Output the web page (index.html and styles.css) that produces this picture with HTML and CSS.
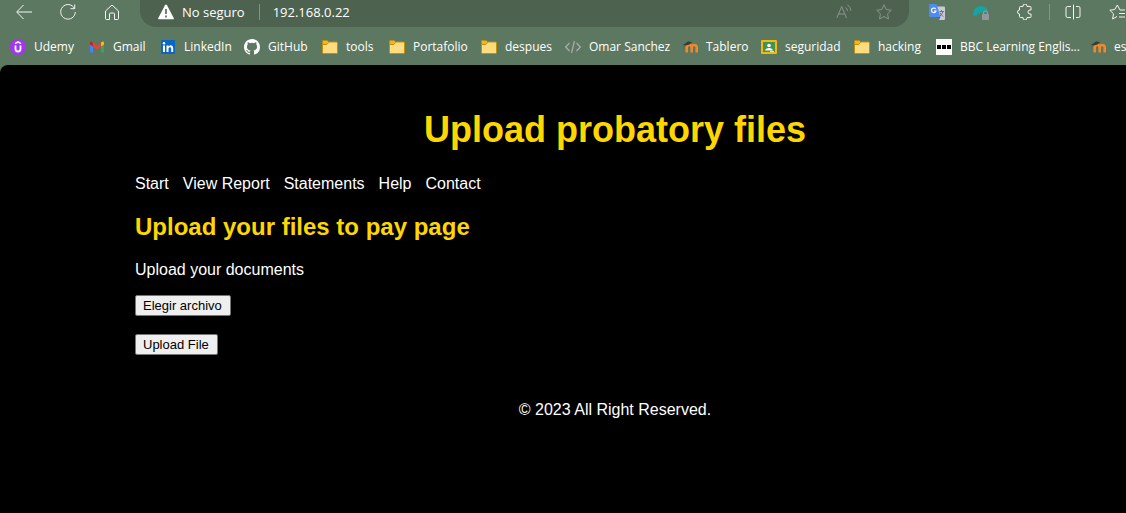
FILE: index.html
```
<!DOCTYPE html>
<html lang="en">
<head>
<meta charset="utf-8">
<title>Upload probatory files</title>
<link rel="stylesheet" href="styles.css">
</head>
<body>
<svg class="defs" aria-hidden="true">
  <symbol id="folder" viewBox="0 0 16 16">
    <path d="M.5 2.5Q.5 1.500 1.500 1.500H5L6.500 3H14.500Q15.500 3 15.500 4V13.500Q15.500 14.500 14.500 14.500H1.500Q.5 14.500.5 13.500Z" fill="#ffdc80" stroke="#c1900b"/>
    <path d="M1 2H5L6.200 3.200 4.800 5H1Z" fill="#e8b923"/>
    <path d="M.5 5.500H4.800L6.800 3.200" fill="none" stroke="#c1900b"/>
  </symbol>
  <symbol id="moodle" viewBox="0 0 16 16">
    <path d="M4.700 13.500V8.500Q4.700 6 7.200 6T9.700 8.500V13.500M9.700 8.500Q9.700 6 12.200 6T14.700 8.500V13.500" fill="none" stroke="#f0882d" stroke-width="2.600"/>
    <path d="M1 6 6 2.500 10 3 7.500 5.500 3.500 6.500Z" fill="#343c38"/>
    <path d="M1.500 6.300V11" stroke="#665f50" stroke-width=".7"/>
  </symbol>
</svg>
<header class="browser">
  <div class="toolbar">
    <div class="nav-buttons">
      <button class="icon-button" aria-label="Back"><svg viewBox="0 0 16 16"><path d="M16 8H1M7.500 1 .7 8l6.800 7"/></svg></button>
      <button class="icon-button" aria-label="Reload"><svg viewBox="0 0 16 16"><path d="M14.500 4.500A7.300 7.300 0 1 0 15.300 8M14.700.5V4.700H10.500"/></svg></button>
      <button class="icon-button" aria-label="Home"><svg viewBox="0 0 16 16"><path d="M1.500 7 8 1l6.500 6v7.500q0 1-1 1h-3V10q0-1-1-1h-3q-1 0-1 1v5.500h-3q-1 0-1-1Z"/></svg></button>
    </div>
    <div class="address">
      <svg class="icon" viewBox="0 0 16 16"><path d="M8 .5Q8.600.5 9 1.200L15.700 14Q16.200 15.300 15 15.300H1Q-.2 15.300.3 14L7 1.200Q7.400.5 8 .5Z" fill="#fff"/><path d="M8 5v5M8 11.500v2" stroke="#4d6350" stroke-width="1.600"/></svg>
      <span class="security">No seguro</span>
      <span class="rule"></span>
      <span class="url">192.168.0.22</span>
      <button class="icon-button dim" aria-label="Read aloud"><svg viewBox="0 0 16 16"><path d="M.8 14 5.700 2.500 10.500 14M2.500 10H8.800M9.500 3.500q1.800 1.300 2 3.500M11.500.8q3 2.200 3.500 6"/></svg></button>
      <button class="icon-button dim" aria-label="Add to favorites"><svg viewBox="0 0 16 16"><path d="m8 .8 2.200 4.700 5.100.7-3.700 3.600.9 5.200L8 12.500 3.500 15l.9-5.200L.7 6.200l5.100-.7Z"/></svg></button>
    </div>
    <div class="extensions">
      <button class="icon-button" aria-label="Translate"><svg viewBox="0 0 16 16"><path d="M7 2.500H15q1 0 1 1V15q0 1-1 1H10Z" fill="#c8ccd0" stroke="none"/><path d="M10.500 7.500h4.500M12.500 6v1.500M14 7.500q-1 3-3 4.500M11 8.500q1 3 3.500 4" stroke="#687078" stroke-width=".9"/><path d="M1 0H7.500L11.500 13H1Q0 13 0 12V1Q0 0 1 0Z" fill="#4d8bf0" stroke="none"/><path d="M8.500 13H11.500L10 16Z" fill="#3267c6" stroke="none"/><path d="M6.700 5A2.300 2.300 0 1 0 7 7H5" stroke="#fff" stroke-width="1.200"/></svg></button>
      <button class="icon-button" aria-label="VPN"><svg viewBox="0 0 16 16"><path d="M0 11.500Q0 6 3.200 3.800 6 1.700 9.200 2.200 14 3 15.500 7.500L11.300 7Q9.700 7.500 9 10L8 8 6.700 10.500 5.300 8.300 3 13 2 11.500Z" fill="#13a5a4" stroke="none"/><path d="M10.500 11V9.200a2 2 0 0 1 4 0V11" stroke="#92979b" stroke-width="1.300"/><rect x="9" y="10" width="7" height="6" rx=".7" fill="#92979b" stroke="none"/></svg></button>
      <button class="icon-button" aria-label="Extensions"><svg viewBox="0 0 16 16"><path d="M3.500 2.500H6V2a2 2 0 0 1 4 0v.5h3q1 0 1 1V6H13a2 2 0 0 0 0 4h1v2.500q0 1-1 1H10V14a2 2 0 0 1-4 0v-.5H3.500q-1 0-1-1V10a2 2 0 0 1 0-4V3.500q0-1 1-1Z"/></svg></button>
      <span class="rule"></span>
      <button class="icon-button" aria-label="Split screen"><svg viewBox="0 0 16 16"><path d="M6 2.500H2.500Q1 2.500 1 4v8q0 1.500 1.500 1.500H6M8.500.5v15M11 2.500h2.500Q15 2.500 15 4v8q0 1.500-1.500 1.500H11"/></svg></button>
      <button class="icon-button" aria-label="Favorites"><svg viewBox="0 0 16 16"><path d="M16 6H11L8.300 1 5.800 5.500.8 6.200 4.500 9.800 3.600 15 8 12.500M10 9.500H16M10 13H16"/></svg></button>
    </div>
  </div>
  <nav class="bookmarks" aria-label="Bookmarks">
    <a href="#"><svg class="icon" viewBox="0 0 16 16"><circle cx="8" cy="8" r="8" fill="#a435f0"/><path d="M5.500 6.500v3.500q0 2.500 2.500 2.500T10.500 10V6.500" fill="none" stroke="#fff" stroke-width="1.800"/><path d="M5 4.700 8 2.800l3 1.900" fill="none" stroke="#fff" stroke-width="1.500"/></svg>Udemy</a>
    <a href="#"><svg class="icon" viewBox="0 0 16 16"><path d="M1 4v9.500h3V6Z" fill="#4285f4"/><path d="M12 6v7.500h3V4Z" fill="#34a853"/><path d="m3.500 3 4.500 4 4.500-4v4L8 10.500 3.500 7Z" fill="#ea4335"/><path d="M1 3.500Q1.500 2 3.500 3l.5 4.500-3-2Z" fill="#c5221f"/><path d="M12 3.500Q14.500 1.500 15 3.500v2l-3 2Z" fill="#fbbc04"/></svg>Gmail</a>
    <a href="#"><svg class="icon" viewBox="0 0 16 16"><rect x="1" y="1" width="14" height="14" rx="1" fill="#0a66c2"/><path d="M3 6.500h2V13H3ZM6.500 6.500h2v1q2-2 3.700-.7 1 .7 1 2.700V13h-2V9.500q0-1.300-1.200-1.300T8.500 9.500V13h-2Z" fill="#fff"/><circle cx="4" cy="4.300" r="1.200" fill="#fff"/></svg>LinkedIn</a>
    <a href="#"><svg class="icon" viewBox="0 0 16 16"><path d="M8 0C3.580 0 0 3.580 0 8c0 3.540 2.290 6.530 5.470 7.590.4.070.55-.17.55-.38 0-.19-.01-.82-.01-1.490-2.010.37-2.530-.49-2.690-.94-.09-.23-.48-.94-.82-1.130-.28-.15-.68-.52-.01-.53.63-.01 1.080.58 1.230.82.72 1.210 1.870.87 2.330.66.07-.52.28-.87.51-1.070-1.780-.2-3.640-.89-3.640-3.950 0-.87.31-1.590.82-2.150-.08-.2-.36-1.020.08-2.120 0 0 .67-.21 2.200.82a7.600 7.600 0 0 1 4 0c1.530-1.040 2.200-.82 2.200-.82.44 1.100.16 1.920.08 2.120.51.56.82 1.270.82 2.150 0 3.070-1.870 3.750-3.650 3.950.29.25.54.73.54 1.480 0 1.070-.01 1.930-.01 2.200 0 .21.15.46.55.38A8.010 8.010 0 0 0 16 8c0-4.420-3.580-8-8-8Z" fill="#fff"/></svg>GitHub</a>
    <a href="#"><svg class="icon"><use href="#folder"/></svg>tools</a>
    <a href="#"><svg class="icon"><use href="#folder"/></svg>Portafolio</a>
    <a href="#"><svg class="icon"><use href="#folder"/></svg>despues</a>
    <a href="#"><svg class="icon" viewBox="0 0 16 16"><path d="M4.500 4 .7 8l3.800 4M11.500 4l3.800 4-3.800 4M9.500 2l-3 12" fill="none" stroke="#aaaeaa" stroke-width="1.200"/></svg>Omar Sanchez</a>
    <a href="#"><svg class="icon"><use href="#moodle"/></svg>Tablero</a>
    <a href="#"><svg class="icon" viewBox="0 0 16 16"><rect y="1" width="16" height="14" rx="1" fill="#f4b911"/><rect x="2" y="3" width="12" height="10" fill="#45934c"/><circle cx="8" cy="6.500" r="1.800" fill="#fff"/><path d="M4 11.500Q4.500 9 8 9t4 2.500Z" fill="#fff"/><path d="M9 12h4v1H9Z" fill="#dbe7d9"/></svg>seguridad</a>
    <a href="#"><svg class="icon"><use href="#folder"/></svg>hacking</a>
    <a href="#"><svg class="icon" viewBox="0 0 16 16"><path d="M0 0h16v16H0Z" fill="#fff"/><path d="M1 6h4v4H1ZM6 6h4v4H6ZM11 6h4v4h-4Z"/></svg>BBC Learning Englis...</a>
    <a href="#"><svg class="icon"><use href="#moodle"/></svg>es</a>
  </nav>
</header>
<main class="page">
  <h1>Upload probatory files</h1>
  <nav class="menu" aria-label="Main">
    <a href="#">Start</a>
    <a href="#">View Report</a>
    <a href="#">Statements</a>
    <a href="#">Help</a>
    <a href="#">Contact</a>
  </nav>
  <h2>Upload your files to pay page</h2>
  <p>Upload your documents</p>
  <form class="upload">
    <label class="control" for="document">Elegir archivo<input class="file" type="file" id="document"></label>
    <button class="control" type="submit">Upload File</button>
  </form>
  <footer>© 2023 All Right Reserved.</footer>
</main>
</body>
</html>
```

FILE: styles.css
```
* { box-sizing: border-box; }

body {
  display: flex;
  flex-direction: column;
  min-height: 100vh;
  margin: 0;
  overflow-x: hidden;
  background: #5c7860;
  font-family: "Liberation Sans", Arial, sans-serif;
}

.defs { position: absolute; width: 0; height: 0; }

.browser {
  color: #fff;
  font-family: "Segoe UI", "Open Sans", "Noto Sans", sans-serif;
}

.toolbar {
  display: flex;
  gap: 20px;
  height: 27px;
}

.nav-buttons,
.extensions {
  display: flex;
  gap: 28px;
  height: 24px;
  align-items: center;
}

.nav-buttons { padding-left: 16px; }
.extensions { padding-right: 1px; }

.icon-button {
  flex: none;
  width: 16px;
  height: 16px;
  padding: 0;
  border: 0;
  background: none;
  color: #f4f6f4;
}

.icon-button svg {
  display: block;
  width: 16px;
  height: 16px;
  fill: none;
  stroke: currentColor;
}

.icon-button.dim { color: #8b958c; }

.icon {
  flex: none;
  width: 16px;
  height: 16px;
}

.address {
  display: flex;
  flex: 1;
  align-items: center;
  gap: 8px;
  padding: 0 17px 3px 18px;
  border-radius: 0 0 16px 16px;
  background: #4d6350;
  font-size: 13px;
  line-height: 20px;
}

.rule {
  width: 1px;
  height: 16px;
  background: #82958a;
}

.address .rule { margin: 0 5px 0 6px; }
.address .dim { margin-left: 16px; }
.url { flex: 1; }

.extensions .rule { margin: 0 -13px 0 -12px; }

.bookmarks {
  display: grid;
  grid-template-columns: 79px 71px 84px 78px 67px 92px 84px 117px 79px 93px 82px 154px 1fr;
  height: 38px;
  padding: 2px 0 0 10px;
  overflow: hidden;
  font-size: 12px;
  line-height: 16px;
}

.bookmarks a {
  display: flex;
  align-items: center;
  gap: 8px;
  color: inherit;
  text-decoration: none;
  white-space: nowrap;
}

.page {
  flex: 1;
  padding: 44px 31px 43px 135px;
  border-top-left-radius: 8px;
  background: #000;
  color: #fff;
  font-size: 16px;
  line-height: 18px;
}

h1, h2 { margin: 0; color: #ffd700; }

h1 {
  margin-bottom: 24px;
  font-size: 36px;
  line-height: 42px;
  text-align: center;
}

.menu { display: flex; gap: 14px; }
.menu a { color: inherit; text-decoration: none; }

h2 {
  margin-top: 20px;
  font-size: 24px;
  line-height: 28px;
}

p { margin: 20px 0 16px; }

.upload {
  display: flex;
  flex-direction: column;
  align-items: flex-start;
  gap: 18px;
}

.control {
  position: relative;
  padding: 2px 8px 2px 7px;
  border: 1px solid #767676;
  border-radius: 2px;
  background: #efefef;
  color: #000;
  font-family: inherit;
  font-size: 13px;
  line-height: 15px;
}

.file {
  position: absolute;
  inset: 0;
  width: 100%;
  height: 100%;
  opacity: 0;
}

footer {
  margin-top: 46px;
  text-align: center;
}
```
